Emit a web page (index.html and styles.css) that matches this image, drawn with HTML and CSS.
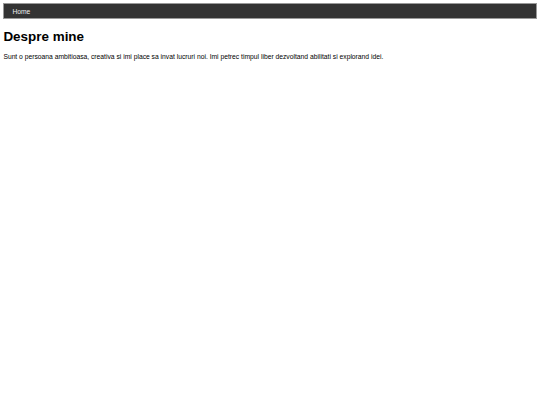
FILE: index.html
```html
<!DOCTYPE html>
<html>
<head>
<meta charset="utf-8">
<link rel="stylesheet" href="styles.css">
</head>
<body>
<nav class="nav">
  <a class="nav-link" href="#">Home</a>
</nav>
<h1 class="title">Despre mine</h1>
<p class="text">Sunt o persoana ambitioasa, creativa si imi place sa invat lucruri noi. Imi petrec timpul liber dezvoltand abilitati si explorand idei.</p>
</body>
</html>
```
FILE: styles.css
```css
body {
  margin: 3.4px;
  font-family: "Liberation Sans", Arial, sans-serif;
  background: #fff;
  color: #000;
}
.nav {
  background: #333;
  border: 1px solid #999;
  height: 14px;
  display: flex;
  align-items: center;
  padding: 0 8px;
}
.nav-link {
  color: #eee;
  text-decoration: none;
  font-size: 6.7px;
}
.title {
  font-size: 13.44px;
  margin: 9.5px 0 9px;
}
.text {
  font-size: 6.74px;
  margin: 7.5px 0;
}
```
